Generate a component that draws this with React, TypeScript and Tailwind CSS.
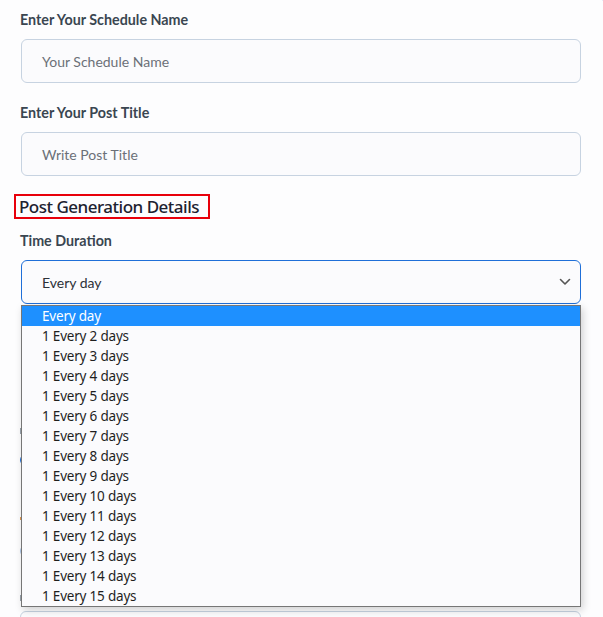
import React from "react";

const options = [
  "Every day",
  "1 Every 2 days",
  "1 Every 3 days",
  "1 Every 4 days",
  "1 Every 5 days",
  "1 Every 6 days",
  "1 Every 7 days",
  "1 Every 8 days",
  "1 Every 9 days",
  "1 Every 10 days",
  "1 Every 11 days",
  "1 Every 12 days",
  "1 Every 13 days",
  "1 Every 14 days",
  "1 Every 15 days",
];

export default function App() {
  return (
    <div className="relative w-[603px] h-[617px] overflow-hidden bg-[#fdfdfe]" style={{ fontFamily: "Lato, 'Noto Sans', sans-serif" }}>
      <div className="absolute right-[-30px] top-[-37px] w-[40px] h-[40px] rounded-full bg-[#1a6fe0]" />
      <div className="pl-[21px] pr-[22px] pt-[11px] flex flex-col">
        <label className="text-[14.3px] font-bold text-[#3a4651] leading-[18px] -ml-px">Enter Your Schedule Name</label>
        <div className="mt-[10px] h-[44px] rounded-[6px] border border-[#c7d3e1] bg-[#fbfbfd] flex items-center pl-[20px] text-[14px] text-[#6b7078]">
          Your Schedule Name
        </div>
        <label className="mt-[21px] text-[14.3px] font-bold text-[#3a4651] leading-[18px] -ml-px">Enter Your Post Title</label>
        <div className="mt-[10px] h-[44px] rounded-[6px] border border-[#c7d3e1] bg-[#fbfbfd] flex items-center pl-[20px] text-[14px] text-[#6b7078]">
          Write Post Title
        </div>
        <div className="mt-[18px] -ml-[7px] self-start border-2 border-[#e8000b] pl-[3px] pr-[9px] h-[25px] flex items-center">
          <span className="text-[17px] font-medium text-[#1d2230] leading-none" style={{ fontFamily: "'Noto Sans', sans-serif", letterSpacing: "-0.5px" }}>Post Generation Details</span>
        </div>
        <label className="mt-[13px] text-[14.3px] font-bold text-[#3a4651] leading-[18px] -ml-px">Time Duration</label>
        <div className="relative mt-[10px]">
          <div className="h-[44px] rounded-[6px] border border-[#1f6fd8] bg-[#fbfbfd] flex items-center pl-[20px] pr-[8px] text-[14px] text-[#2c3138]">
            <span className="flex-1">Every day</span>
            <svg width="12" height="8" viewBox="0 0 12 8" className="mr-[1px]">
              <path d="M1.5 1.5 L6 6 L10.5 1.5" fill="none" stroke="#555" strokeWidth="1.6" strokeLinecap="round" strokeLinejoin="round" />
            </svg>
          </div>
          <div className="absolute left-0 right-0 top-[45px] z-10 border border-[#767676] bg-[#fbfbfd] shadow-[2px_3px_8px_rgba(0,0,0,0.18)]" style={{ fontFamily: "'Noto Sans', sans-serif" }}>
            {options.map((o, i) => (
              <div
                key={o}
                className={
                  "h-[20px] pl-[20px] pt-[1px] flex items-center text-[13.5px] tracking-[-0.2px] " +
                  (i === 0 ? "bg-[#1e90ff] text-white" : "text-[#1f1f1f]")
                }
              >
                {o}
              </div>
            ))}
          </div>
        </div>
        <div className="-ml-px flex flex-col">
          <div className="mt-[124px] h-[6px] w-[30px] bg-[#9aa3ad]" />
          <div className="mt-[20px] h-[12px] w-[12px] rounded-full border-2 border-[#1f6fd8]" />
          <div className="mt-[51px] h-[3px] w-[10px] bg-[#e39a4f]" />
          <div className="mt-[25px] h-[12px] w-[12px] rounded-full border border-[#a9c3e6]" />
          <div className="mt-[38px] h-[6px] w-[30px] bg-[#9aa3ad]" />
          <div className="mt-[10px] h-[44px] rounded-[6px] border border-[#c7d3e1] bg-[#fbfbfd]" />
        </div>
      </div>
    </div>
  );
}
